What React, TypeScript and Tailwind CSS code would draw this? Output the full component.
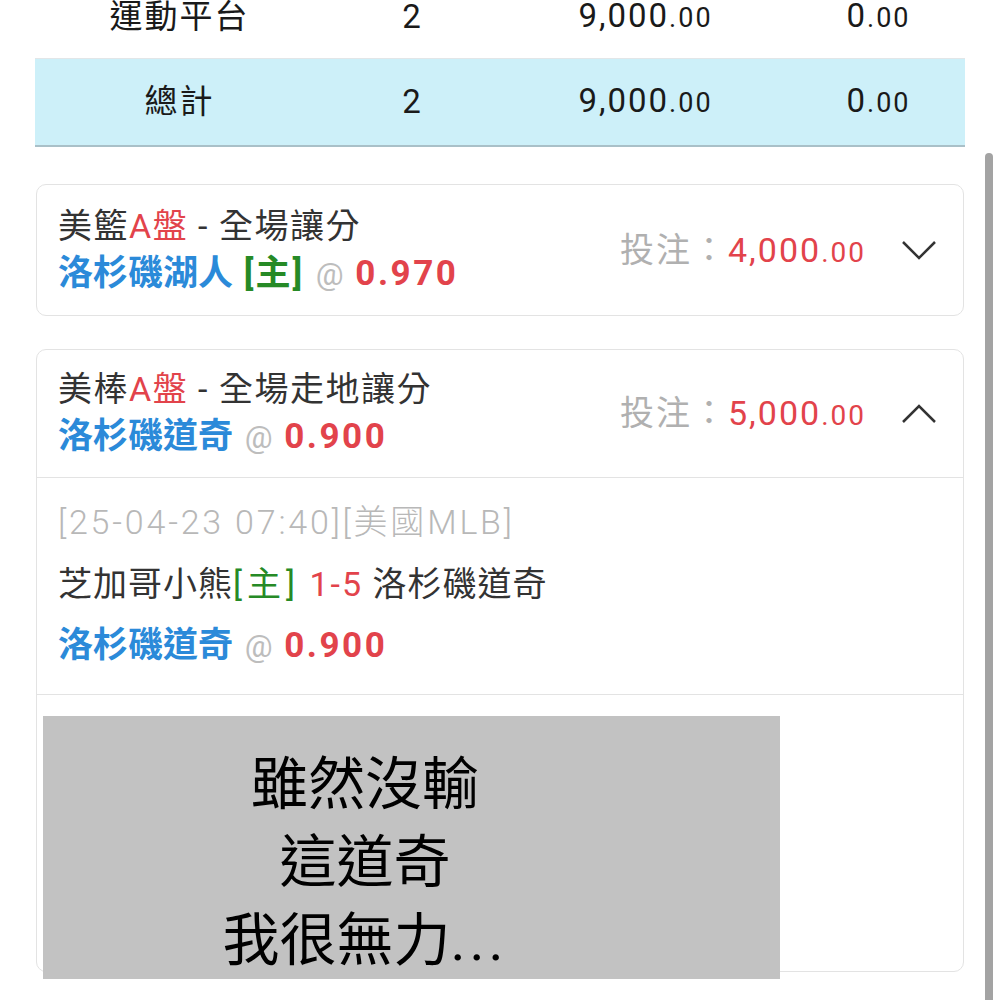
import React from "react";

const FONT = { fontFamily: '"Roboto", "Noto Sans CJK TC", sans-serif' };

function Amount({ big, small, className, smallCls }: { big: string; small: string; className?: string; smallCls: string }) {
  return (
    <span className={className}>
      {big}
      <span className={smallCls}>{small}</span>
    </span>
  );
}

function Chevron({ up }: { up?: boolean }) {
  return (
    <svg width="36" height="20" viewBox="0 0 36 20" className="shrink-0">
      {up ? (
        <polyline points="2,18 18,2 34,18" fill="none" stroke="#333" strokeWidth="2.5" />
      ) : (
        <polyline points="2,2 18,18 34,2" fill="none" stroke="#333" strokeWidth="2.5" />
      )}
    </svg>
  );
}

function TableRow({ label, cls }: { label: string; cls: string }) {
  return (
    <div className={`grid grid-cols-[233px_233px_233px_1fr] items-center pl-[28px] text-[33px] leading-[30px] text-[#1a1a1a] tracking-[2px] ${cls}`}>
      <div className="text-center">{label}</div>
      <div className="text-center">2</div>
      <div className="text-center">
        <Amount big="9,000" small=".00" smallCls="text-[27px]" />
      </div>
      <div className="text-center pl-[30px]">
        <Amount big="0" small=".00" smallCls="text-[27px]" />
      </div>
    </div>
  );
}

function Pick({ team, home, odds }: { team: string; home?: boolean; odds: string }) {
  return (
    <div className="text-[35px] font-bold text-[#2b8ad9]">
      {team}
      {home ? <span className="text-[#268a26] tracking-[2px]"> [主]</span> : null}{" "}
      <span className="font-normal text-[#bdbdbd] text-[31px] mx-[3px]">@</span>{" "}
      <span className="text-[#e2434b] tracking-[2.5px]">{odds}</span>
    </div>
  );
}

function Stake({ amount }: { amount: string }) {
  return (
    <div className="text-[34px] tracking-[2px]">
      <span className="text-[#b0b0b0]">投注：</span>
      <Amount big={amount} small=".00" className="text-[#e2434b]" smallCls="text-[28px]" />
    </div>
  );
}

export default function App() {
  return (
    <div className="relative w-[1000px] h-[1000px] overflow-hidden bg-white" style={FONT}>
      <div className="ml-[35px] w-[930px]">
        <TableRow label="運動平台" cls="h-[83px] -mt-[24px] border-b border-[#e2e6e8]" />
        <TableRow label="總計" cls="h-[88px] bg-[#cdf0f9] border-b-2 border-[#a9c0c8]" />
      </div>

      <div className="ml-[36px] w-[928px] mt-[37px] flex flex-col gap-[33px]">
        <div className="h-[132px] rounded-[10px] border-[1.5px] border-[#e3e3e3] flex items-center justify-between pl-[21px] pr-[26px]">
          <div className="flex flex-col leading-[47px]">
            <div className="text-[34px] text-[#333] tracking-[1.5px]">
              美籃<span className="text-[#e2434b]">A盤</span> - 全場讓分
            </div>
            <Pick team="洛杉磯湖人" home odds="0.970" />
          </div>
          <div className="flex items-center gap-[35px]">
            <Stake amount="4,000" />
            <Chevron />
          </div>
        </div>

        <div className="rounded-[10px] border-[1.5px] border-[#e3e3e3] flex flex-col">
          <div className="h-[128px] flex items-center justify-between pl-[21px] pr-[26px] border-b-[1.5px] border-[#e3e3e3]">
            <div className="flex flex-col leading-[48px]">
              <div className="text-[34px] text-[#333] tracking-[1.5px]">
                美棒<span className="text-[#e2434b]">A盤</span> - 全場走地讓分
              </div>
              <Pick team="洛杉磯道奇" odds="0.900" />
            </div>
            <div className="flex items-center gap-[35px]">
              <Stake amount="5,000" />
              <Chevron up />
            </div>
          </div>
          <div className="pl-[21px] pt-[13px] pb-[16px] leading-[62px] border-b-[1.5px] border-[#e3e3e3]">
            <div className="text-[34px] font-light tracking-[2.8px] text-[#b8b8b8]">[25-04-23 07:40][美國MLB]</div>
            <div className="text-[34px] text-[#333] tracking-[1px]">
              芝加哥小熊<span className="text-[#268a26] tracking-[5px]">[主]</span>{" "}
              <span className="text-[#e2434b] tracking-[2px]">1-5</span> 洛杉磯道奇
            </div>
            <Pick team="洛杉磯道奇" odds="0.900" />
          </div>
          <div className="h-[276px]" />
        </div>
      </div>

      <div className="absolute left-[43px] top-[716px] w-[737px] h-[263px] bg-[#c2c2c2] pt-[30px] pr-[93px] text-center text-[57px] leading-[78px] text-black">
        <div>雖然沒輸</div>
        <div>這道奇</div>
        <div>
          我很無力<span className="tracking-[4px]">...</span>
        </div>
      </div>

      <div className="absolute left-[985px] top-[153px] w-[8px] h-[860px] rounded-full bg-[#a3a3a3]" />
    </div>
  );
}
